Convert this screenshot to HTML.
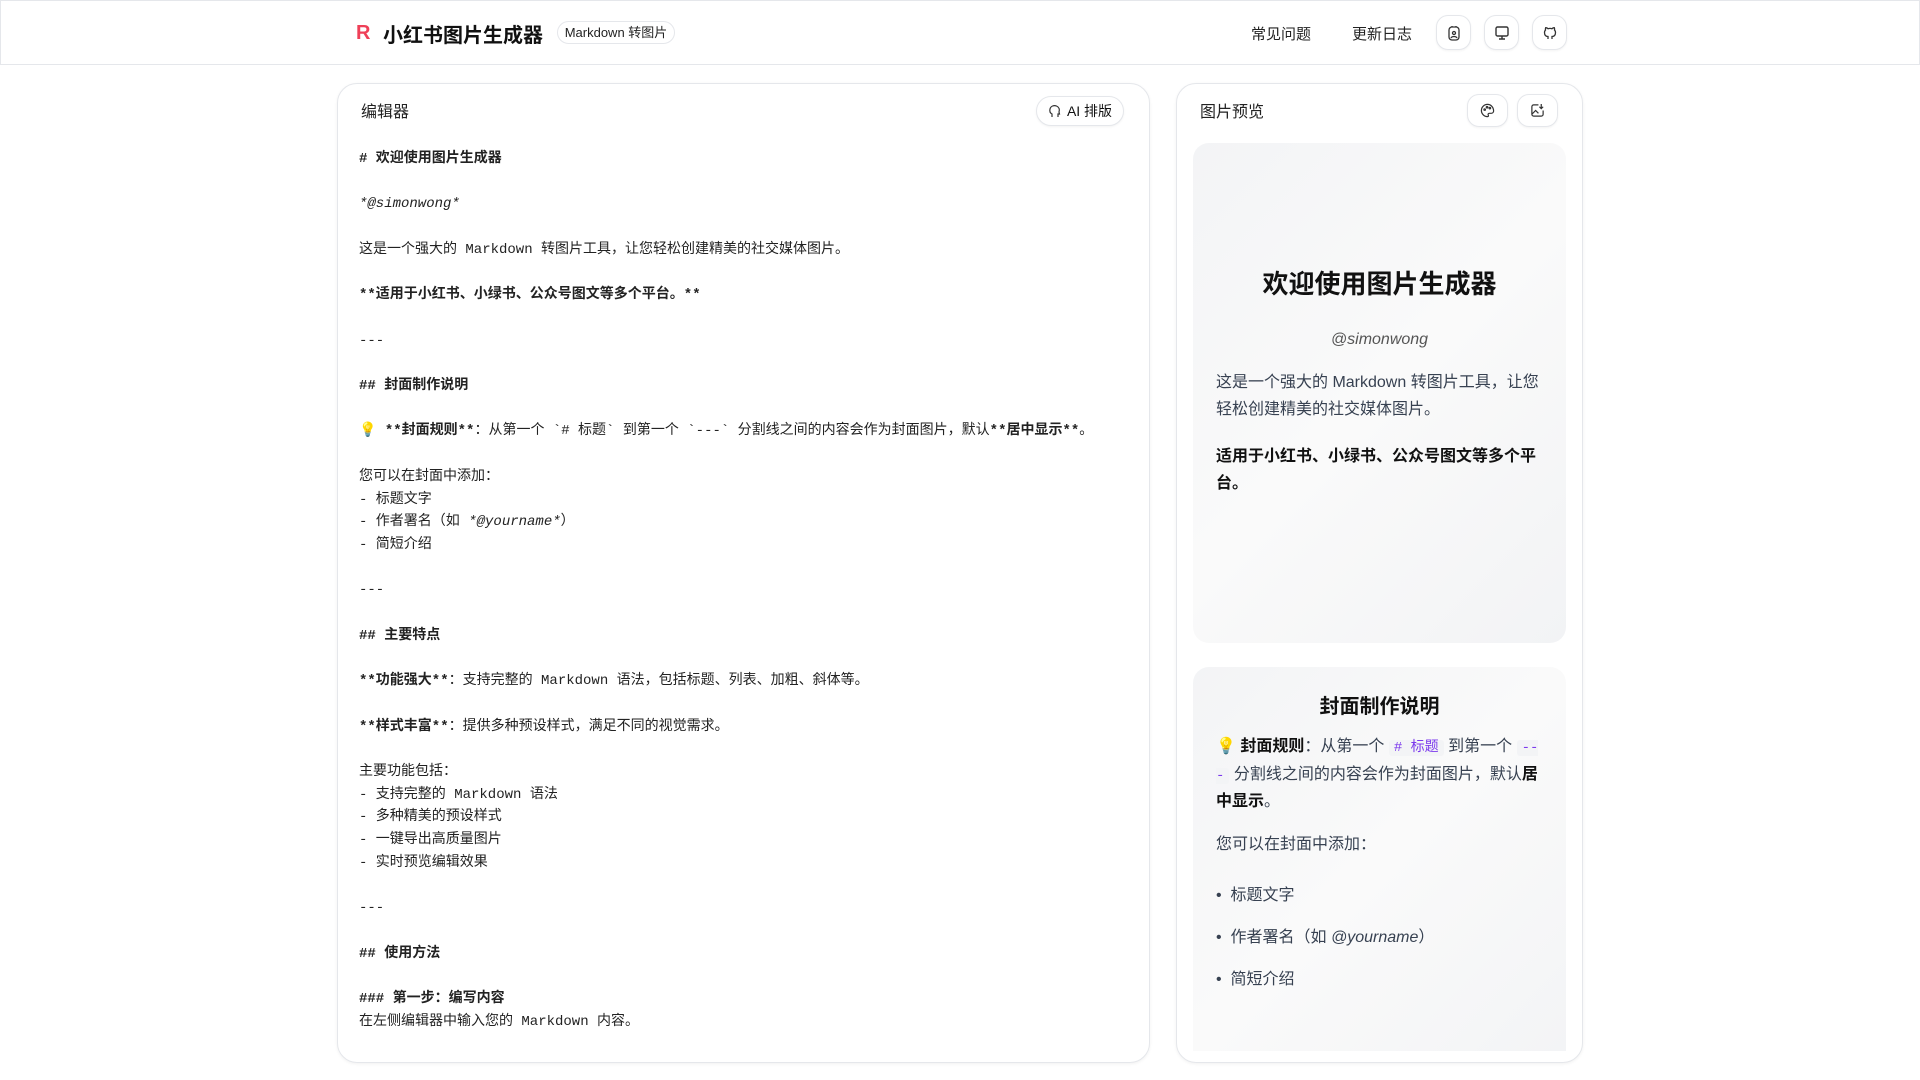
<!DOCTYPE html>
<html><head><meta charset="utf-8"><style>
*{box-sizing:border-box;margin:0;padding:0}
body{width:1920px;height:1080px;overflow:hidden;background:#fff;font-family:"Liberation Sans","Noto Sans CJK SC",sans-serif;color:#111;position:relative}
.hdr{position:absolute;left:0;top:0;width:1920px;height:65px;border:1px solid #e5e7eb;background:#fff}
.abs{position:absolute}
.logo{left:356px;top:22px;color:#ef4058;font-weight:bold;font-size:20px}
.ttl{left:383px;top:19px;font-size:20px;font-weight:bold;color:#111}
.badge{left:557px;top:21px;width:118px;height:23px;border:1px solid #e5e7eb;border-radius:12px;font-size:13px;line-height:21px;text-align:center;color:#222}
.nav{top:23px;font-size:15px;color:#222}
.ib{width:35px;height:35px;border:1px solid #e5e7eb;border-radius:12px;display:flex;align-items:center;justify-content:center;box-shadow:0 1px 2px rgba(0,0,0,.05);background:#fff}
.card{border:1px solid #e5e7eb;border-radius:20px;background:#fff;box-shadow:0 1px 3px rgba(0,0,0,.06);overflow:hidden}
.ed{left:359px;top:148px;font-family:"Liberation Mono","Noto Sans CJK SC",monospace;font-size:14px;line-height:22.7px;color:#222;white-space:pre}
.ed b{font-weight:bold}
.cover{left:1193px;top:143px;width:373px;height:500px;border-radius:16px;background:linear-gradient(135deg,#f3f4f6,#fafafa 50%,#f2f3f5)}
.p{font-size:16px;line-height:26.5px;color:#374151}
code{font-family:"Liberation Mono",monospace;font-size:14px;background:#f3f4f6;border-radius:3px;padding:0 5px;color:#7c3aed}
</style></head><body>
<div class="hdr"></div>
<div class="abs logo">R</div>
<div class="abs ttl">小红书图片生成器</div>
<div class="abs badge">Markdown 转图片</div>
<div class="abs nav" style="left:1251px">常见问题</div>
<div class="abs nav" style="left:1352px">更新日志</div>
<div class="abs ib" style="left:1436px;top:15px"><svg width="14" height="16" viewBox="0 0 14 16" fill="none" stroke="#333" stroke-width="1.3"><rect x="2" y="2" width="10" height="13" rx="3"/><circle cx="7" cy="8" r="1.5"/><path d="M4 13c1-2 5-2 6 0M5 2V1M9 2V1"/></svg></div>
<div class="abs ib" style="left:1484px;top:15px"><svg width="16" height="16" viewBox="0 0 16 16" fill="none" stroke="#333" stroke-width="1.4"><rect x="2" y="2" width="12" height="9" rx="1.5"/><path d="M8 11v3M5 14h6"/></svg></div>
<div class="abs ib" style="left:1532px;top:15px"><svg width="16" height="16" viewBox="0 0 16 16" fill="none" stroke="#333" stroke-width="1.3"><path d="M6 14v-2.5c-2.5 0-3.5-1.5-3.5-4 0-1 .3-1.8 1-2.5-.2-.8-.1-1.6.2-2.3 1 0 1.8.5 2.300 1a6 6 0 0 1 4 0c.5-.5 1.3-1 2.3-1 .3.7.4 1.5.2 2.3.7.7 1 1.5 1 2.5 0 2.5-1 4-3.5 4V14"/></svg></div>

<div class="abs card" style="left:337px;top:83px;width:813px;height:980px"></div>
<div class="abs" style="left:361px;top:98px;font-size:16px;color:#222">编辑器</div>
<div class="abs ib" style="left:1036px;top:96px;width:88px;height:30px;border-radius:15px;font-size:14px;gap:5px"><svg width="14" height="14" viewBox="0 0 14 14" fill="none" stroke="#333" stroke-width="1.2"><path d="M4 13v-3C2 9 1.5 7 2 5c.7-3 4-4 6.5-3C11 3 12 5.5 11 8l.5 2H10v3"/></svg>AI 排版</div>
<div class="abs ed"><b># 欢迎使用图片生成器</b>

<i>*@simonwong*</i>

这是一个强大的 Markdown 转图片工具，让您轻松创建精美的社交媒体图片。

<b>**适用于小红书、小绿书、公众号图文等多个平台。**</b>

---

<b>## 封面制作说明</b>

💡 <b>**封面规则**</b>：从第一个 `# 标题` 到第一个 `---` 分割线之间的内容会作为封面图片，默认<b>**居中显示**</b>。

您可以在封面中添加：
- 标题文字
- 作者署名（如 <i>*@yourname*</i>）
- 简短介绍

---

<b>## 主要特点</b>

<b>**功能强大**</b>：支持完整的 Markdown 语法，包括标题、列表、加粗、斜体等。

<b>**样式丰富**</b>：提供多种预设样式，满足不同的视觉需求。

主要功能包括：
- 支持完整的 Markdown 语法
- 多种精美的预设样式
- 一键导出高质量图片
- 实时预览编辑效果

---

<b>## 使用方法</b>

<b>### 第一步：编写内容</b>
在左侧编辑器中输入您的 Markdown 内容。</div>

<div class="abs card" style="left:1176px;top:83px;width:407px;height:980px"></div>
<div class="abs" style="left:1200px;top:98px;font-size:16px;color:#222">图片预览</div>
<div class="abs ib" style="left:1467px;top:94px;width:41px;height:33px"><svg width="15" height="15" viewBox="0 0 16 16" fill="none" stroke="#333" stroke-width="1.3"><path d="M8 1.5a6.5 6.5 0 0 0 0 13c1 0 1.3-.8.8-1.6-.5-.8 0-1.9 1-1.9H12a2.5 2.5 0 0 0 2.5-2.5C14.5 4.5 11.6 1.5 8 1.5z"/><circle cx="5" cy="7" r=".8"/><circle cx="7.5" cy="4.5" r=".8"/><circle cx="10.5" cy="5.5" r=".8"/></svg></div>
<div class="abs ib" style="left:1517px;top:94px;width:41px;height:33px"><svg width="15" height="15" viewBox="0 0 16 16" fill="none" stroke="#333" stroke-width="1.3"><path d="M9 2H4a2 2 0 0 0-2 2v8a2 2 0 0 0 2 2h8a2 2 0 0 0 2-2V8M12 1v5M10 4l2 2 2-2M2 12l4-4 3 3"/></svg></div>

<div class="abs cover"></div>
<div class="abs" style="left:1193px;width:373px;top:264px;text-align:center;font-size:26px;font-weight:bold;color:#111">欢迎使用图片生成器</div>
<div class="abs" style="left:1193px;width:373px;top:331px;text-align:center;font-size:16px;font-style:italic;color:#555">@simonwong</div>
<div class="abs p" style="left:1216px;top:370px;width:330px">这是一个强大的 Markdown 转图片工具，让您轻松创建精美的社交媒体图片。</div>
<div class="abs p" style="left:1216px;top:444px;width:330px;font-weight:bold;color:#111">适用于小红书、小绿书、公众号图文等多个平台。</div>

<div class="abs" style="left:1193px;top:667px;width:373px;height:384px;border-radius:16px 16px 0 0;background:linear-gradient(135deg,#f3f4f6,#fafafa 50%,#f3f4f6)"></div>
<div class="abs" style="left:1193px;width:373px;top:690px;text-align:center;font-size:20px;font-weight:bold;color:#111">封面制作说明</div>
<div class="abs p" style="left:1216px;top:734px;width:330px;word-break:break-all">💡 <b style="color:#111">封面规则</b>：从第一个 <code># 标题</code> 到第一个 <code>---</code> 分割线之间的内容会作为封面图片，默认<b style="color:#111">居中显示</b>。</div>
<div class="abs p" style="left:1216px;top:832px">您可以在封面中添加：</div>
<div class="abs p" style="left:1216px;top:883px">•&nbsp; 标题文字</div>
<div class="abs p" style="left:1216px;top:925px">•&nbsp; 作者署名（如 <i>@yourname</i>）</div>
<div class="abs p" style="left:1216px;top:967px">•&nbsp; 简短介绍</div>
</body></html>
